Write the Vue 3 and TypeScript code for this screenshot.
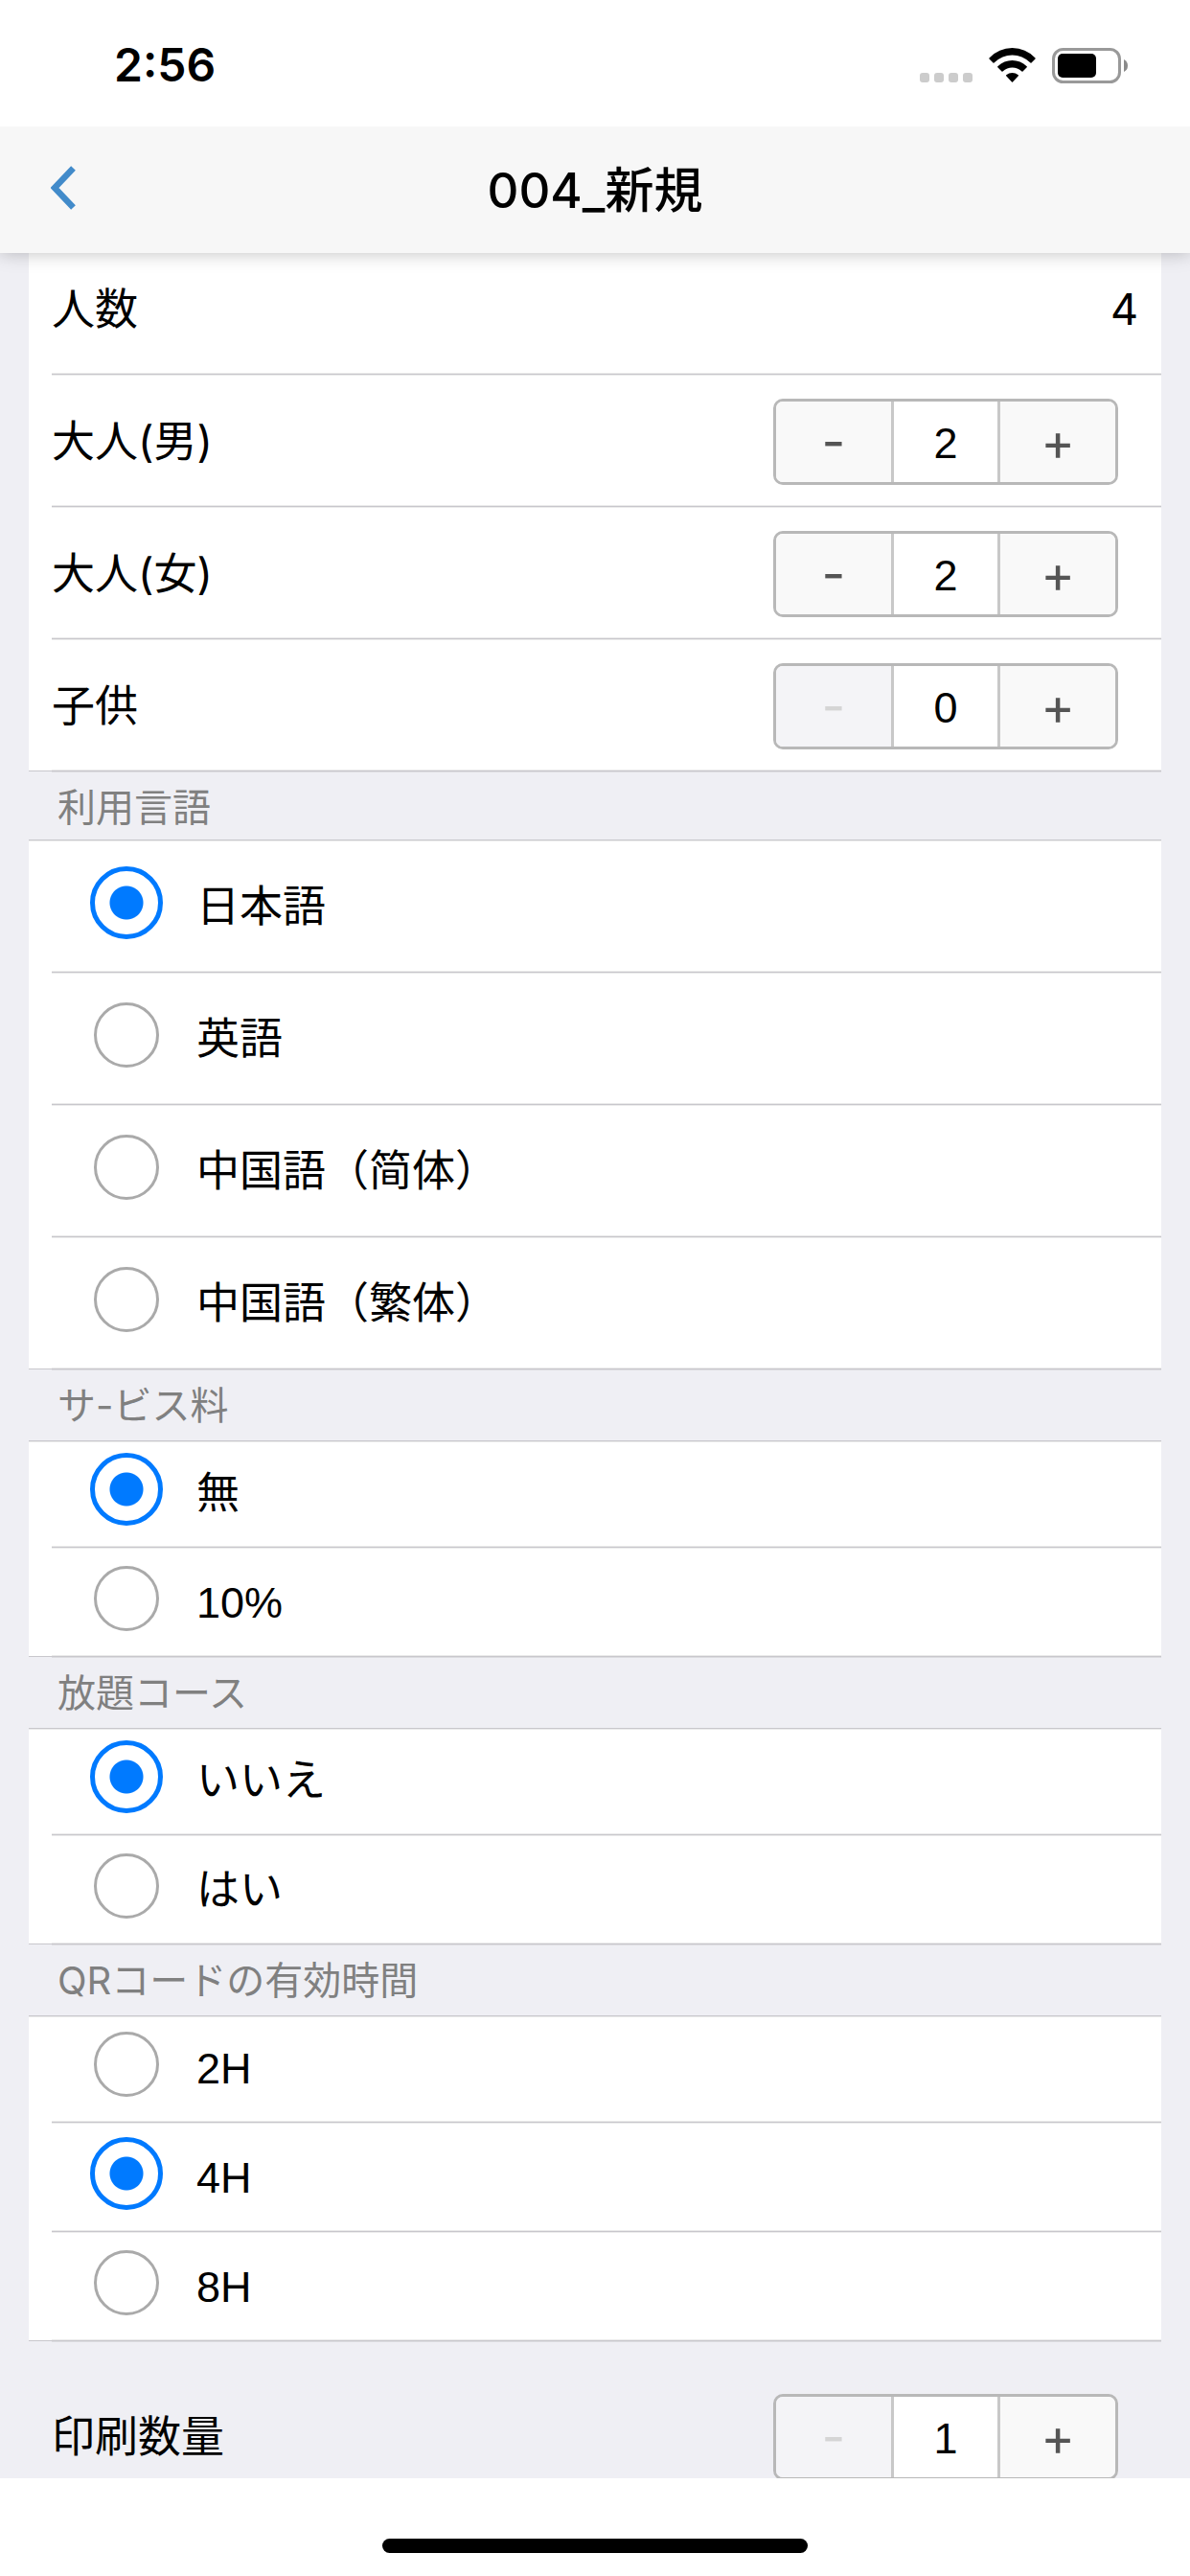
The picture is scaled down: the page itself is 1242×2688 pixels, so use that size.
<script setup lang="ts">
import { computed, reactive } from 'vue'

interface Counter {
  id: string
  label: string
  value: number
  min: number
}

interface ChoiceGroup {
  id: string
  title: string
  roomy: boolean
  selected: string
  options: string[]
}

const guests = reactive<Counter[]>([
  { id: 'men', label: '大人(男)', value: 2, min: 0 },
  { id: 'women', label: '大人(女)', value: 2, min: 0 },
  { id: 'children', label: '子供', value: 0, min: 0 },
])

const prints = reactive<Counter[]>([
  { id: 'prints', label: '印刷数量', value: 1, min: 1 },
])

const groups = reactive<ChoiceGroup[]>([
  {
    id: 'language',
    title: '利用言語',
    roomy: true,
    selected: '日本語',
    options: ['日本語', '英語', '中国語（简体）', '中国語（繁体）'],
  },
  { id: 'service', title: 'サ-ビス料', roomy: false, selected: '無', options: ['無', '10%'] },
  { id: 'course', title: '放題コース', roomy: false, selected: 'いいえ', options: ['いいえ', 'はい'] },
  { id: 'qr', title: 'QRコードの有効時間', roomy: false, selected: '4H', options: ['2H', '4H', '8H'] },
])

const total = computed(() => guests.reduce((sum, g) => sum + g.value, 0))
</script>

<template>
  <div class="screen" lang="ja">
    <div class="status">
      <span class="clock">2:56</span>
      <div class="indicators">
        <svg width="55" height="37" viewBox="0 0 55 37" fill="#ccc" aria-hidden="true">
          <rect x="0" y="26" width="10" height="10" rx="3" />
          <rect x="15" y="26" width="10" height="10" rx="3" />
          <rect x="30" y="26" width="10" height="10" rx="3" />
          <rect x="45" y="26" width="10" height="10" rx="3" />
        </svg>
        <svg width="49" height="37" viewBox="0 0 49 37" aria-hidden="true">
          <path d="M0.5 10.5Q10.5 0 24.5 0Q38.5 0 48.5 10.5Q49 11 48.5 11.5L44.5 15.5Q44 16 43.5 15.5Q35 7.5 24.5 7.5Q14 7.5 5.5 15.5Q5 16 4.5 15.5L0.5 11.5Q0 11 0.5 10.5Z" />
          <path d="M9.3 19.3Q16 13 24.5 13Q33 13 39.7 19.3Q40.2 19.8 39.7 20.3L35.5 24.5Q35 25 34.5 24.5Q30 20.5 24.5 20.5Q19 20.5 14.5 24.5Q14 25 13.5 24.5L9.3 20.3Q8.8 19.8 9.3 19.3Z" />
          <path d="M18.2 28.2Q21 26 24.5 26Q28 26 30.8 28.2Q31.3 28.7 30.8 29.2L25 35.5Q24.5 36 24 35.5L18.2 29.2Q17.7 28.7 18.2 28.2Z" />
        </svg>
        <svg width="79" height="37" viewBox="0 0 79 37" aria-hidden="true">
          <rect x="1.5" y="1.5" width="69" height="34" rx="10" fill="none" stroke="#999" stroke-width="3" />
          <rect x="6" y="6" width="40" height="25" rx="5" />
          <path d="M75 12Q79 14 79 18.5Q79 23 75 25Z" fill="#8a8a8a" />
        </svg>
      </div>
    </div>

    <header class="bar">
      <button type="button" class="back" aria-label="戻る">
        <svg width="26" height="46" viewBox="0 0 26 46" aria-hidden="true">
          <path d="M23.5 2.5L4 23L23.5 43.5" fill="none" stroke="#428bca" stroke-width="6.5" />
        </svg>
      </button>
      <h1 class="title">004_新規</h1>
    </header>

    <main class="form">
      <section class="card counters">
        <div class="row">
          <span>人数</span>
          <output class="total">{{ total }}</output>
        </div>
        <div v-for="g in guests" :key="g.id" class="row">
          <label :for="g.id">{{ g.label }}</label>
          <div class="stepper">
            <button type="button" aria-label="減らす" :disabled="g.value <= g.min" @click="g.value--">-</button>
            <input :id="g.id" v-model.number="g.value" type="text" inputmode="numeric" />
            <button type="button" aria-label="増やす" @click="g.value++">+</button>
          </div>
        </div>
      </section>

      <template v-for="group in groups" :key="group.id">
        <h2 :id="group.id" class="heading" :class="{ short: group.roomy }">{{ group.title }}</h2>
        <section class="card" role="radiogroup" :aria-labelledby="group.id">
          <label v-for="o in group.options" :key="o" class="choice" :class="{ roomy: group.roomy }">
            <input v-model="group.selected" type="radio" :name="group.id" :value="o" />
            <span>{{ o }}</span>
          </label>
        </section>
      </template>

      <div v-for="p in prints" :key="p.id" class="row print">
        <label :for="p.id">{{ p.label }}</label>
        <div class="stepper">
          <button type="button" aria-label="減らす" :disabled="p.value <= p.min" @click="p.value--">-</button>
          <input :id="p.id" v-model.number="p.value" type="text" inputmode="numeric" />
          <button type="button" aria-label="増やす" @click="p.value++">+</button>
        </div>
      </div>
    </main>

    <footer class="home"><div class="grip"></div></footer>
  </div>
</template>

<style>
body {
  margin: 0;
  background: #fff;
}
</style>

<style scoped>
* {
  box-sizing: border-box;
}

.screen {
  display: flex;
  flex-direction: column;
  height: 100vh;
  overflow: hidden;
  color: #000;
  background: #fff;
  font-family: Inter, 'Noto Sans CJK JP', sans-serif;
  font-size: 45px;
  line-height: 60px;
}

.status {
  position: relative;
  z-index: 3;
  flex: none;
  display: flex;
  align-items: center;
  justify-content: space-between;
  height: 132px;
  padding: 4px 65px 0 119px;
  background: #fff;
}

.clock {
  font-size: 48px;
  font-weight: 600;
}

.indicators {
  display: flex;
  gap: 17px;
}

.bar {
  position: relative;
  z-index: 2;
  flex: none;
  display: grid;
  grid-template-columns: 132px 1fr 132px;
  align-items: center;
  height: 132px;
  background: #f7f7f7;
  box-shadow: 0 0 18px rgba(0, 0, 0, 0.25);
}

.back {
  display: flex;
  align-items: center;
  height: 132px;
  padding: 0 0 4px 53px;
  border: 0;
  background: none;
}

.title {
  margin: 0;
  padding-top: 2px;
  font-size: 51px;
  font-weight: 500;
  text-align: center;
}

.form {
  flex: 1;
  min-height: 0;
  padding: 0 30px;
  overflow: hidden;
  background: #efeff4;
}

.card {
  padding-left: 24px;
  background: #fff;
  border-top: 1px solid #c8c7cc;
  border-bottom: 1px solid #c8c7cc;
  box-shadow: inset 0 1px rgba(0, 0, 0, 0.08);
}

/* the list is scrolled slightly under the title bar */
.counters {
  margin-top: -12px;
}

.row {
  display: flex;
  align-items: center;
  justify-content: space-between;
  height: 138px;
  padding: 2px 24px 0 0;
  border-bottom: 1px solid #c8c7cc;
}

.row,
.choice {
  box-shadow: inset 0 -1px rgba(0, 0, 0, 0.08), 0 1px rgba(0, 0, 0, 0.08);
}

/* the last divider lies on the card's own bottom edge */
.row:last-child,
.choice:last-child {
  margin-bottom: -1px;
}

.stepper {
  display: flex;
  width: 360px;
  height: 90px;
  margin-right: 21px;
  overflow: hidden;
  border: 3px solid #b8b8b8;
  border-radius: 10px;
}

.stepper button {
  flex: none;
  width: 120px;
  padding: 0;
  border: 0;
  color: #555;
  background: #f9f9f9;
  font: 54px/84px Inter, sans-serif;
}

.stepper button:disabled {
  color: #d5d5d5;
  background: #f4f4f7;
}

.stepper input {
  flex: 1;
  min-width: 0;
  padding: 3px 0 0;
  border: 0;
  border-left: 3px solid #c8c8c8;
  border-right: 3px solid #c8c8c8;
  border-radius: 0;
  color: #000;
  background: #fff;
  font: 45px/81px 'Liberation Sans', sans-serif;
  text-align: center;
}

.heading {
  margin: 0;
  height: 74px;
  padding-left: 30px;
  color: #808080;
  font-size: 40px;
  font-weight: 400;
  line-height: 76px;
}

.heading.short {
  height: 71px;
}

.choice {
  display: flex;
  align-items: flex-end;
  gap: 35px;
  height: 114px;
  padding: 0 24px 22px 40px;
  border-bottom: 1px solid #c8c7cc;
  font-family: 'Liberation Sans', 'Noto Sans CJK JP', sans-serif;
}

.choice:first-child {
  height: 111px;
}

.choice.roomy {
  height: 138px;
  padding-bottom: 34px;
}

.choice span {
  padding-bottom: 3px;
}

.choice input {
  appearance: none;
  flex: none;
  width: 68px;
  height: 68px;
  margin: 4px;
  border: 3px solid #aaa;
  border-radius: 50%;
  background: #fff;
}

.choice input:checked {
  width: 76px;
  height: 76px;
  margin: 0;
  border: 5px solid #007aff;
  background: radial-gradient(circle, #007aff 17px, #fff 18px);
}

.row.print {
  height: 197px;
  margin-bottom: 0;
  padding-left: 24px;
  border-bottom: 0;
  box-shadow: none;
}

.home {
  flex: none;
  display: flex;
  justify-content: center;
  align-items: flex-end;
  height: 102px;
  padding-bottom: 24px;
  background: #fff;
}

.grip {
  width: 444px;
  height: 15px;
  border-radius: 8px;
  background: #000;
}
</style>
